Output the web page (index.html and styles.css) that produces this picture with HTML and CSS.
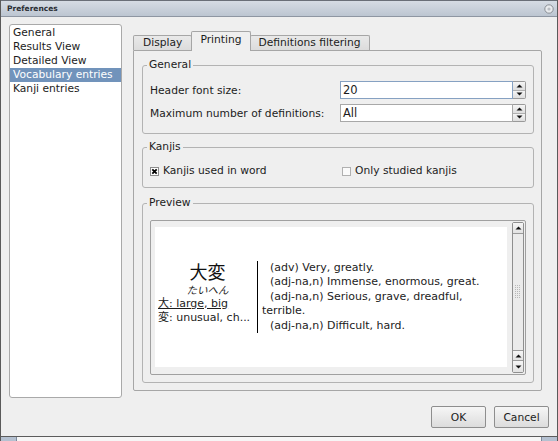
FILE: index.html
```html
<!DOCTYPE html>
<html>
<head>
<meta charset="utf-8">
<link rel="stylesheet" href="styles.css">
</head>
<body>
<div class="window">
  <div class="titlebar">
    <span class="title">Preferences</span>
    <svg class="closebtn" width="10" height="10" viewBox="0 0 10 10"><circle cx="5" cy="5" r="4.2" fill="#e9ebee" stroke="#8a8f96" stroke-width="1"/><circle cx="5" cy="5" r="1.6" fill="#b9bdc3"/></svg>
  </div>
  <div class="content">
    <div class="main">
      <ul class="pagelist">
        <li>General</li>
        <li>Results View</li>
        <li>Detailed View</li>
        <li class="selected">Vocabulary entries</li>
        <li>Kanji entries</li>
      </ul>
      <div class="right">
        <div class="tabbar">
          <div class="tab tab-display">Display</div>
          <div class="tab active">Printing</div>
          <div class="tab">Definitions filtering</div>
        </div>
        <div class="pane">
          <fieldset class="group general">
            <legend>General</legend>
            <div class="form">
              <span class="label">Header font size:</span>
              <div class="spinbox">
                <div class="field focused">20</div>
                <div class="spinbtns">
                  <span class="sbtn"><svg width="7" height="4" viewBox="0 0 7 4"><path d="M0.5 3.5 L3.5 0.5 L6.5 3.5 Z" fill="#111"/></svg></span>
                  <span class="sbtn"><svg width="7" height="4" viewBox="0 0 7 4"><path d="M0.5 0.5 L3.5 3.5 L6.5 0.5 Z" fill="#111"/></svg></span>
                </div>
              </div>
              <span class="label">Maximum number of definitions:</span>
              <div class="spinbox">
                <div class="field">All</div>
                <div class="spinbtns">
                  <span class="sbtn"><svg width="7" height="4" viewBox="0 0 7 4"><path d="M0.5 3.5 L3.5 0.5 L6.5 3.5 Z" fill="#111"/></svg></span>
                  <span class="sbtn"><svg width="7" height="4" viewBox="0 0 7 4"><path d="M0.5 0.5 L3.5 3.5 L6.5 0.5 Z" fill="#111"/></svg></span>
                </div>
              </div>
            </div>
          </fieldset>
          <fieldset class="group kanjis">
            <legend>Kanjis</legend>
            <div class="checks">
              <div class="check">
                <svg class="cbox" width="9" height="9" viewBox="0 0 9 9"><rect x="0.5" y="0.5" width="8" height="8" fill="#fff" stroke="#8c8c8c"/><path d="M2.3 2.3 L6.7 6.7 M6.7 2.3 L2.3 6.7" stroke="#000" stroke-width="1.8"/></svg>
                <span>Kanjis used in word</span>
              </div>
              <div class="check off">
                <svg class="cbox" width="9" height="9" viewBox="0 0 9 9"><rect x="0.5" y="0.5" width="8" height="8" fill="#fafafa" stroke="#b0b0b0"/></svg>
                <span>Only studied kanjis</span>
              </div>
            </div>
          </fieldset>
          <fieldset class="group preview">
            <legend>Preview</legend>
            <div class="frame">
              <div class="viewport">
                <div class="paper">
                  <div class="entry">
                    <div class="wordcol">
                      <div class="kanji">大変</div>
                      <div class="kana">たいへん</div>
                      <div class="meaning underlined">大: large, big</div>
                      <div class="meaning">変: unusual, ch...</div>
                    </div>
                    <div class="defs">
                      <p>(adv) Very, greatly.</p>
                      <p>(adj-na,n) Immense, enormous, great.</p>
                      <p>(adj-na,n) Serious, grave, dreadful, terrible.</p>
                      <p>(adj-na,n) Difficult, hard.</p>
                    </div>
                  </div>
                </div>
              </div>
              <div class="scrollbar">
                <span class="sarrow"><svg width="7" height="4" viewBox="0 0 7 4"><path d="M0.5 3.5 L3.5 0.5 L6.5 3.5 Z" fill="#111"/></svg></span>
                <span class="handle"><svg width="6" height="14" viewBox="0 0 6 14"><g fill="#b8b8b8"><rect x="0" y="0" width="1" height="1"/><rect x="2" y="0" width="1" height="1"/><rect x="4" y="0" width="1" height="1"/><rect x="0" y="2" width="1" height="1"/><rect x="2" y="2" width="1" height="1"/><rect x="4" y="2" width="1" height="1"/><rect x="0" y="4" width="1" height="1"/><rect x="2" y="4" width="1" height="1"/><rect x="4" y="4" width="1" height="1"/><rect x="0" y="6" width="1" height="1"/><rect x="2" y="6" width="1" height="1"/><rect x="4" y="6" width="1" height="1"/><rect x="0" y="8" width="1" height="1"/><rect x="2" y="8" width="1" height="1"/><rect x="4" y="8" width="1" height="1"/><rect x="0" y="10" width="1" height="1"/><rect x="2" y="10" width="1" height="1"/><rect x="4" y="10" width="1" height="1"/><rect x="0" y="12" width="1" height="1"/><rect x="2" y="12" width="1" height="1"/><rect x="4" y="12" width="1" height="1"/></g></svg></span>
                <span class="sarrow"><svg width="7" height="4" viewBox="0 0 7 4"><path d="M0.5 3.5 L3.5 0.5 L6.5 3.5 Z" fill="#111"/></svg></span>
                <span class="sarrow"><svg width="7" height="4" viewBox="0 0 7 4"><path d="M0.5 0.5 L3.5 3.5 L6.5 0.5 Z" fill="#111"/></svg></span>
              </div>
            </div>
          </fieldset>
        </div>
      </div>
    </div>
    <div class="buttons">
      <button class="btn">OK</button>
      <button class="btn">Cancel</button>
    </div>
  </div>
  <div class="bottomframe"><span class="corner"></span><span class="corner right-corner"></span></div>
</div>
</body>
</html>
```

FILE: styles.css
```css
* { box-sizing: border-box; }
html, body { margin: 0; padding: 0; }
body {
  width: 558px;
  height: 441px;
  overflow: hidden;
  font-family: "DejaVu Sans", "Noto Sans CJK JP", sans-serif;
  font-size: 10.7px;
  color: #1c1c1c;
  background: #efefef;
}
.window {
  width: 558px;
  height: 441px;
  display: flex;
  flex-direction: column;
  border-left: 1px solid #5a5a5a;
  border-right: 1px solid #5a5a5a;
  background: #efefef;
}
.titlebar {
  height: 17px;
  flex: none;
  display: flex;
  align-items: center;
  justify-content: space-between;
  padding: 0 3px 0 6px;
  background: linear-gradient(#d6dce4, #bcc5d1);
  border-top: 1px solid #6a6f78;
  border-bottom: 1px solid #8e96a2;
}
.title {
  font-weight: bold;
  font-size: 7.5px;
  color: #2a2d33;
}
.closebtn { display: block; }
.content {
  flex: 1;
  display: flex;
  flex-direction: column;
  padding: 7px 8px 8px 8px;
}
.main {
  height: 374px;
  flex: none;
  display: flex;
}
.pagelist {
  width: 113px;
  flex: none;
  margin: 0;
  padding: 1px 0 0;
  list-style: none;
  background: #fff;
  border: 1px solid #a9a9a9;
  border-radius: 3px;
}
.pagelist li {
  height: 14px;
  line-height: 14px;
  padding-left: 3px;
  white-space: nowrap;
}
.pagelist li.selected {
  background: #7193bb;
  color: #fff;
}
.right {
  flex: 1;
  display: flex;
  flex-direction: column;
  margin: 0 7px 0 11px;
  padding: 7px 0;
}
.tabbar {
  height: 19px;
  flex: none;
  display: flex;
  align-items: flex-end;
  position: relative;
  z-index: 1;
}
.tab {
  height: 15px;
  line-height: 14px;
  padding: 0 8px;
  border: 1px solid #a6a6a6;
  border-bottom: none;
  border-radius: 2px 2px 0 0;
  background: linear-gradient(#e9e9e9, #dcdcdc);
  white-space: nowrap;
}
.tab + .tab { margin-left: -1px; }
.tab-display { padding: 0 9px; }
.tab.active {
  height: 20px;
  margin-bottom: -1px;
  line-height: 16px;
  background: #efefef;
  position: relative;
  z-index: 2;
}
.pane {
  flex: 1;
  border: 1px solid #a6a6a6;
  border-radius: 0 2px 2px 2px;
  padding: 7px 7px 7px 8px;
  display: flex;
  flex-direction: column;
}
.group {
  margin: 0;
  min-width: 0;
  border: 1px solid #b3b3b3;
  border-radius: 3px;
  padding: 0 7px;
}
.group legend {
  padding: 0 2px;
  margin-left: -3px;
  height: 14px;
  line-height: 14px;
}
.general { padding-top: 9px; padding-bottom: 11px; }
.kanjis { margin-top: 6px; padding-top: 10px; padding-bottom: 9px; }
.preview {
  margin-top: 8px;
  padding-top: 10px;
  padding-bottom: 7px;
  flex: 1;
  display: flex;
  flex-direction: column;
}
.form {
  display: grid;
  grid-template-columns: 190px 1fr;
  row-gap: 5px;
  align-items: center;
}
.spinbox {
  display: flex;
  height: 18px;
}
.field {
  flex: 1;
  background: #fff;
  border: 1px solid #a8a8a8;
  padding-left: 2px;
  line-height: 16px;
  font-size: 11.5px;
}
.field.focused { border-color: #86a1c2; }
.spinbtns {
  width: 13px;
  display: flex;
  flex-direction: column;
  border: 1px solid #9a9a9a;
  border-left: none;
  border-radius: 0 2px 2px 0;
}
.sbtn {
  flex: 1;
  display: flex;
  align-items: center;
  justify-content: center;
  background: linear-gradient(#f5f5f5, #dedede);
}
.sbtn + .sbtn { border-top: 1px solid #b0b0b0; }
.sbtn svg { display: block; }
.checks {
  display: grid;
  grid-template-columns: 1fr 1fr;
  column-gap: 8px;
  height: 14px;
}
.check {
  display: flex;
  align-items: center;
  gap: 4px;
  line-height: 14px;
}
.cbox { display: block; flex: none; }
.frame {
  height: 155px;
  flex: none;
  display: flex;
  border: 1px solid #a0a0a0;
  border-radius: 2px;
}
.viewport {
  flex: 1;
  padding: 6px 5px 7px 4px;
  display: flex;
}
.paper {
  flex: 1;
  background: #fff;
  display: flex;
  align-items: center;
  padding: 0 10px 0 3px;
  font-size: 11px;
}
.entry {
  flex: 1;
  display: flex;
  align-items: flex-start;
}
.wordcol {
  width: 99px;
  flex: none;
}
.kanji {
  text-align: center;
  font-family: "Noto Sans CJK JP", sans-serif;
  font-size: 18px;
  line-height: 21px;
  color: #111;
}
.kana {
  text-align: center;
  font-family: "Noto Sans CJK JP", sans-serif;
  font-size: 10.5px;
  font-style: italic;
  line-height: 15px;
  color: #1c1c1c;
}
.meaning {
  line-height: 14px;
  white-space: nowrap;
}
.underlined { text-decoration: underline; }
.defs {
  flex: 1;
  border-left: 1px solid #000;
  padding-left: 4px;
}
.defs p {
  margin: 0;
  text-indent: 8px;
  line-height: 14.5px;
}
.scrollbar {
  width: 12px;
  flex: none;
  margin: 1px 1px 1px 0;
  display: flex;
  flex-direction: column;
  border: 1px solid #8f8f8f;
  border-radius: 2px;
  background: #e6e6e6;
}
.sarrow {
  height: 11px;
  flex: none;
  display: flex;
  align-items: center;
  justify-content: center;
  background: linear-gradient(#f6f6f6, #e2e2e2);
}
.sarrow svg { display: block; }
.sarrow:first-child { border-bottom: 1px solid #9a9a9a; }
.sarrow:nth-child(3) { border-top: 1px solid #9a9a9a; border-bottom: 1px solid #9a9a9a; }
.handle {
  flex: 1;
  display: flex;
  align-items: center;
  justify-content: center;
  background: #ebebeb;
}
.handle svg { display: block; }
.buttons {
  margin-top: 8px;
  height: 22px;
  flex: none;
  display: flex;
  justify-content: flex-end;
  gap: 8px;
}
.btn {
  width: 55px;
  height: 22px;
  padding: 0;
  font-family: inherit;
  font-size: 10.7px;
  color: #1c1c1c;
  border: 1px solid #8e8e8e;
  border-radius: 2px;
  background: linear-gradient(#f6f6f6, #dcdcdc);
}
.bottomframe {
  height: 5px;
  flex: none;
  display: flex;
  justify-content: space-between;
  border-top: 1px solid #5c5c5c;
  background: #f6f6f6;
}
.corner {
  width: 16px;
  background: #b5c1d1;
  border-right: 1px solid #7d8a9c;
}
.right-corner {
  border-right: none;
  border-left: 1px solid #7d8a9c;
}
```
